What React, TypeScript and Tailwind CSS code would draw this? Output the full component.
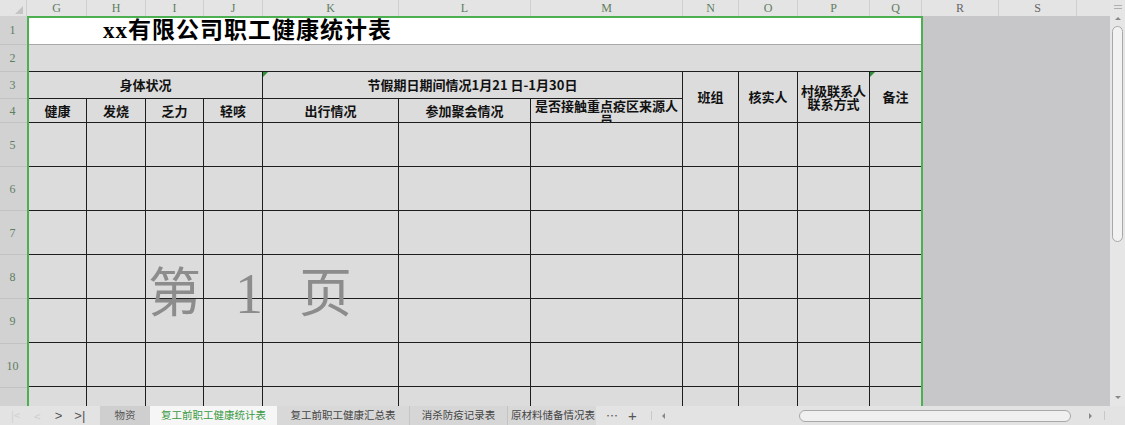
import React from "react";

const colHeaders: [string, number, boolean][] = [
  ["G", 60, true],
  ["H", 59, true],
  ["I", 58, true],
  ["J", 59, true],
  ["K", 136, true],
  ["L", 132, true],
  ["M", 152, true],
  ["N", 56, true],
  ["O", 59, true],
  ["P", 72, true],
  ["Q", 52, true],
  ["R", 77, false],
  ["S", 78, false],
];

const rowHeaders: [string, number][] = [
  ["1", 29],
  ["2", 27],
  ["3", 27],
  ["4", 24],
  ["5", 44],
  ["6", 44],
  ["7", 44],
  ["8", 44],
  ["9", 45],
  ["10", 44],
  ["", 44],
];

const B = "border-[#1e1e1e]";

function Tri() {
  return (
    <span className="absolute left-0 top-0 h-0 w-0 border-t-[5px] border-r-[5px] border-t-[#2f8f3a] border-r-transparent" />
  );
}

export default function App() {
  const bodyRows = [5, 6, 7, 8, 9, 10, 11];
  return (
    <div className="flex h-[425px] w-[1125px] flex-col overflow-hidden bg-[#e3e3e3] font-['Noto_Sans_CJK_SC',sans-serif]">
      <div className="flex h-[406px] overflow-hidden">
        {/* sheet */}
        <div className="flex w-[1110px] flex-col overflow-hidden">
          {/* column header */}
          <div className="flex h-[16px] shrink-0 bg-[#e4e4e4] font-['Liberation_Serif',serif] text-[12px] leading-[16px]">
            <div className="relative w-[27px] shrink-0 border-r border-[#cfcfcf]">
              <span className="absolute right-[3px] bottom-[2px] h-0 w-0 border-b-[8px] border-l-[8px] border-b-[#c4c4c4] border-l-transparent" />
            </div>
            {colHeaders.map(([l, w, sel]) => (
              <div
                key={l}
                style={{ width: w }}
                className={`shrink-0 border-r border-[#cfcfcf] text-center ${sel ? "text-[#5f7d5f]" : "text-[#666]"}`}
              >
                {l}
              </div>
            ))}
            <div className="flex-1" />
          </div>
          {/* body */}
          <div className="flex min-h-0 flex-1">
            <div className="flex w-[27px] shrink-0 flex-col bg-[#d2d2d2] font-['Liberation_Serif',serif] text-[12px] text-[#5f7d5f]">
              {rowHeaders.map(([n, h], i) => (
                <div
                  key={i}
                  style={{ height: h }}
                  className="flex shrink-0 items-center justify-center border-b border-[#c2c2c2] pr-[2px]"
                >
                  {n}
                </div>
              ))}
            </div>
            <div className="relative w-[896px] shrink-0 overflow-hidden border-2 border-b-0 border-[#4caf50] bg-[#dcdcdc]">
              <div className="grid grid-cols-[58px_59px_58px_59px_136px_132px_152px_56px_59px_72px_51px] grid-rows-[27px_27px_27px_24px_44px_44px_44px_44px_44px_44px_44px] text-[13px] font-bold text-[#111]">
                <div className="col-span-11 flex items-center border-b border-[#a8a8a8] bg-white pl-[74px] font-['Liberation_Serif','Noto_Sans_CJK_SC',serif] text-[23px] tracking-[1px] text-black">
                  xx有限公司职工健康统计表
                </div>
                <div className={`col-span-11 border-b ${B}`} />
                <div className={`col-span-4 flex items-center justify-center border-r border-b ${B}`}>身体状况</div>
                <div className={`relative col-span-3 flex items-center justify-center border-r border-b ${B}`}>
                  <Tri />
                  节假期日期间情况1月21 日-1月30日
                </div>
                <div className={`row-span-2 flex items-center justify-center border-r border-b ${B}`}>班组</div>
                <div className={`row-span-2 flex items-center justify-center border-r border-b ${B}`}>核实人</div>
                <div className={`row-span-2 flex flex-col items-center justify-center border-r border-b ${B} text-center leading-[13px]`}>
                  <span className="block h-[13px]">村级联系人</span>
                  <span className="block h-[13px]">联系方式</span>
                </div>
                <div className={`relative row-span-2 flex items-center justify-center border-b ${B}`}>
                  <Tri />
                  备注
                </div>
                {["健康", "发烧", "乏力", "轻咳", "出行情况", "参加聚会情况"].map((t) => (
                  <div key={t} className={`flex items-center justify-center border-r border-b ${B}`}>
                    {t}
                  </div>
                ))}
                <div className={`overflow-hidden border-r border-b ${B} px-[2px] text-center leading-[14px]`}>
                  是否接触重点疫区来源人员
                </div>
                {bodyRows.map((r) =>
                  Array.from({ length: 11 }).map((_, c) => (
                    <div key={`${r}-${c}`} className={`border-b ${c < 10 ? "border-r" : ""} ${B}`} />
                  ))
                )}
              </div>
              <div className="pointer-events-none absolute left-[119px] top-[248px] flex items-center font-['Liberation_Serif','Noto_Sans_CJK_SC',serif] text-[53px] leading-none text-[#8c8c8c]">
                <span>第</span>
                <span className="ml-[34px] font-['Liberation_Serif',serif] text-[56px]">1</span>
                <span className="ml-[36px]">页</span>
              </div>
            </div>
            <div className="flex-1 bg-[#c7c7c9]" />
          </div>
        </div>
        {/* vertical scrollbar */}
        <div className="relative flex w-[15px] flex-col items-center bg-[#e6e6e6]">
          <div className="mt-[5px] flex flex-col gap-[2px]">
            <span className="block h-px w-[8px] bg-[#b0b0b0]" />
            <span className="block h-px w-[8px] bg-[#b0b0b0]" />
          </div>
          <span className="mt-[8px] h-0 w-0 border-x-[3px] border-b-[3px] border-x-transparent border-b-[#888]" />
          <div className="mt-[6px] h-[216px] w-[11px] rounded-full border border-[#a8a8a8] bg-[#f2f2f2]" />
          <span className="absolute bottom-[7px] h-0 w-0 border-x-[3px] border-t-[3px] border-x-transparent border-t-[#888]" />
        </div>
      </div>
      {/* tab bar */}
      <div className="flex h-[19px] items-stretch bg-[#e3e3e3] text-[10.5px] leading-none text-[#444]">
        <div className="flex w-[100px] items-center">
          <span className="ml-[11px] text-[11px] text-[#cfcfcf]">|&lt;</span>
          <span className="ml-[14px] text-[12px] text-[#cfcfcf]">&lt;</span>
          <span className="ml-[14px] font-['Liberation_Sans',sans-serif] text-[13px] text-[#555]">&gt;</span>
          <span className="ml-[12px] font-['Liberation_Sans',sans-serif] text-[13px] text-[#555]">&gt;|</span>
        </div>
        <div className="flex w-[50px] items-center justify-center bg-[#cfcfcf] text-[#555]">物资</div>
        <div className="flex w-[127px] items-center justify-center bg-[#f6f6f6] text-[#3b9a45]">复工前职工健康统计表</div>
        <div className="flex w-[133px] items-center justify-center border-r border-[#c4c4c4] bg-[#d8d8d8] text-[#444]">复工前职工健康汇总表</div>
        <div className="flex w-[98px] items-center justify-center border-r border-[#c4c4c4] bg-[#d6d6d6] text-[#444]">消杀防疫记录表</div>
        <div className="flex w-[88px] items-center overflow-hidden whitespace-nowrap bg-[#d8d8d8] pl-[3px] text-[#444]">原材料储备情况表</div>
        <div className="flex flex-1 items-center">
          <span className="ml-[10px] text-[12px] text-[#555]">⋯</span>
          <span className="ml-[10px] font-['Liberation_Sans',sans-serif] text-[15px] leading-[15px] text-[#555]">+</span>
          <span className="ml-[14px] h-[9px] w-px bg-[#c8c8c8]" />
          <span className="ml-[10px] h-0 w-0 border-y-[3px] border-r-[3px] border-y-transparent border-r-[#888]" />
          <div className="ml-[134px] h-[12px] w-[272px] rounded-full border border-[#a8a8a8] bg-[#f0f0f0]" />
          <span className="ml-[18px] h-0 w-0 border-y-[3px] border-l-[3px] border-y-transparent border-l-[#888]" />
          <span className="ml-[12px] h-[9px] w-px bg-[#c8c8c8]" />
        </div>
      </div>
    </div>
  );
}
